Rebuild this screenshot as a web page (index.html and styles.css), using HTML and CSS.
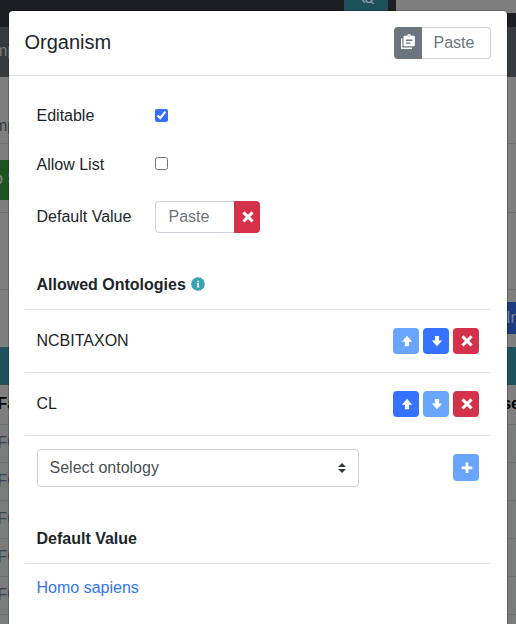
FILE: index.html
```html
<!DOCTYPE html>
<html lang="en">
<head>
<meta charset="utf-8">
<title>Organism</title>
<link rel="stylesheet" href="styles.css">
</head>
<body>
<svg class="defs" width="0" height="0" aria-hidden="true">
  <symbol id="up" viewBox="0 0 26 26"><path d="M14 7.8 19.2 13.8H16.1V18.2H11.9V13.8H8.8Z" fill="#fff"/></symbol>
  <symbol id="down" viewBox="0 0 26 26"><path d="M14 18.3 19.2 12.5H16.1V7.9H11.9V12.5H8.8Z" fill="#fff"/></symbol>
  <symbol id="cross" viewBox="0 0 26 26"><path d="M10.5 9.4 17.5 16.4M17.5 9.4 10.5 16.4" stroke="#fff" stroke-width="3" stroke-linecap="square" fill="none"/></symbol>
  <symbol id="plus" viewBox="0 0 26 26"><path d="M14 7.5V18.1M8.7 12.8H19.3" stroke="#fff" stroke-width="2.7" fill="none"/></symbol>
</svg>
<div class="page">
  <div class="topbar">
    <div class="search"><svg width="44" height="13" viewBox="0 0 44 13"><path d="M18.5 0 21 2.5"/><circle cx="25" cy="-.5" r="3"/><path d="M27 1.5 29.5 4"/></svg></div>
    <div class="searchbox"></div>
  </div>
  <div class="subbar"><span class="clip">mp</span></div>
  <div class="crumb"><span class="clip">mp</span></div>
  <div class="toolbar"><span class="green">o S</span></div>
  <div class="blank"></div>
  <div class="actions"><span class="blue">In</span></div>
  <div class="teal"></div>
  <div class="thead"><span>Fa</span><span>se</span></div>
  <div class="trow">FC</div>
  <div class="trow">FC</div>
  <div class="trow">FC</div>
  <div class="trow">FC</div>
  <div class="trow">FC</div>
  <div class="trow"></div>
</div>
<div class="modal">
  <header class="head">
    <h1>Organism</h1>
    <div class="group">
      <span class="clipicon"><svg width="28" height="32" viewBox="0 0 28 32"><path d="M7.7 11.5V21.3H18" fill="none" stroke="#fff" stroke-width="1.4"/><path fill="#fff" fill-rule="evenodd" d="M10.3 8.8H13.3A1.8 1.8 0 0 1 16.9 8.8H19.5Q20.9 8.8 20.9 10.2V18Q20.9 19.3 19.5 19.3H10.8Q9.5 19.3 9.5 18V10.2Q9.5 8.8 10.8 8.8ZM14.5 8.8H15.7V9.4H14.5ZM12 12.6V13.9H18.4V12.6ZM12 15.4V16.7H16.4V15.4Z"/></svg></span>
      <input class="paste headpaste" type="text" placeholder="Paste">
    </div>
  </header>
  <main class="body">
    <div class="field"><span class="label">Editable</span><input type="checkbox" class="check" checked></div>
    <div class="field list"><span class="label">Allow List</span><input type="checkbox" class="check"></div>
    <div class="field default"><span class="label">Default Value</span><div class="group"><input class="paste valuepaste" type="text" placeholder="Paste"><button class="btn red joined"><svg><use href="#cross"/></svg></button></div></div>

    <h2 class="allowed">Allowed Ontologies <svg class="info" width="14" height="14" viewBox="0 0 14 14"><circle cx="7" cy="7" r="6.8" fill="#3aa2b7"/><path d="M6.3 3.7H7.8V5.2H6.3ZM5.9 6H7.9V9.4H8.5V10.5H5.7V9.4H6.3V7.1H5.9Z" fill="#fff"/></svg></h2>
    <div class="ontology"><span>NCBITAXON</span><div class="buttons"><button class="btn light"><svg><use href="#up"/></svg></button><button class="btn primary"><svg><use href="#down"/></svg></button><button class="btn red"><svg><use href="#cross"/></svg></button></div></div>
    <div class="ontology"><span>CL</span><div class="buttons"><button class="btn primary"><svg><use href="#up"/></svg></button><button class="btn light"><svg><use href="#down"/></svg></button><button class="btn red"><svg><use href="#cross"/></svg></button></div></div>
    <div class="ontology add"><div class="select"><span>Select ontology</span><svg width="8" height="10" viewBox="0 0 8 10"><path d="M4 0 8 4H0ZM4 10 0 6H8Z" fill="#343a40"/></svg></div><button class="btn light"><svg><use href="#plus"/></svg></button></div>

    <h2>Default Value</h2>
    <div class="ontology value"><a>Homo sapiens</a></div>
  </main>
</div>
</body>
</html>
```
FILE: styles.css
```css
* { box-sizing: border-box; }
html, body { height: 100%; overflow: hidden; }
body { margin: 0; font: 16px/24px "Liberation Sans", Arial, sans-serif; color: #212529; background: #fff; }
.defs { position: absolute; }
h1, h2 { margin: 0; }

/* Dimmed page behind the dialog */
.page { height: 624px; overflow: hidden; background: #7f7f7f; white-space: nowrap; }
.topbar { height: 27px; background: #1c1e21; display: flex; align-items: flex-start; padding-left: 344px; gap: 8px; }
.search { width: 44px; height: 13px; background: #1d515c; }
.search svg { display: block; fill: none; stroke: #8b9799; stroke-width: 1.6; }
.searchbox { flex: 1; height: 13px; background: #7f7f7f; }
.subbar { height: 50px; background: #373b3f; padding-top: 12px; color: #7b7d7f; }
.clip { margin-left: -6px; }
.crumb { height: 67px; padding-top: 37px; color: #36383b; border-bottom: 1px solid #6f7071; }
.toolbar { height: 69px; padding-top: 16px; border-bottom: 1px solid #6f7071; }
.green { display: block; width: 40px; height: 40px; padding-top: 7px; text-indent: -6px; background: #1b5522; color: #858b85; overflow: hidden; }
.blank { height: 77px; border-bottom: 1px solid #6f7071; }
.actions { height: 57px; padding-top: 12px; display: flex; justify-content: flex-end; }
.blue { width: 10px; height: 32px; padding-top: 4px; background: #1c3b82; color: #828792; overflow: hidden; }
.teal { height: 38px; background: #1d515c; }
.thead { height: 40px; padding-top: 7px; border-bottom: 1px solid #6c6e6f; font-weight: bold; color: #000; display: flex; justify-content: space-between; margin: 0 -4px 0 -2.5px; }
.trow { height: 38px; padding-top: 6px; color: #34435e; background: #797c7b; border-bottom: 1px solid #6c6e6f; text-indent: -2.5px; }

/* Dialog */
.modal { position: absolute; left: 8px; top: 10px; width: 500px; height: 640px; background: #fff; background-clip: padding-box; border: 1px solid rgba(0, 0, 0, .2); border-radius: 5px; }
.head { height: 65px; padding: 0 16px 0 15.5px; display: flex; align-items: center; justify-content: space-between; border-bottom: 1px solid #dee2e6; }
h1 { font-size: 20px; font-weight: 400; line-height: 30px; padding-bottom: 2px; }
.group { display: flex; height: 32px; }
.clipicon { width: 28px; background: #6c757d; border-radius: 4px 0 0 4px; }
.clipicon svg { display: block; }
.paste { height: 32px; border: 1px solid #ced4da; padding: 0 12px 1px; font: inherit; background: #fff; outline: 0; border-radius: 0; }
.paste::placeholder { color: #6c757d; opacity: 1; }
.headpaste { width: 69px; padding-left: 11.5px; border-left: 0; border-radius: 0 4px 4px 0; }
.valuepaste { width: 79px; padding-left: 12.5px; border-right: 0; border-radius: 4px 0 0 4px; }
.body { padding: 16px; }
.field { display: flex; align-items: center; height: 48px; padding-left: 11.5px; }
.list { height: 49px; }
.default { height: 56px; margin-bottom: 16px; }
.label { width: 118.5px; }
.check { width: 13px; height: 13px; margin: 0 0 2px; accent-color: #366fff; }
h2 { font-size: 16px; line-height: 24px; padding: 12px 12px 12px 11.5px; height: 48px; }
.info { vertical-align: -1px; margin-left: 1px; }
.ontology { height: 63px; display: flex; align-items: center; justify-content: space-between; padding: 0 12px 0 11.5px; border-top: 1px solid #dee2e6; }
.buttons { display: flex; gap: 4px; }
.btn { width: 26px; height: 26px; padding: 0; border: 0; border-radius: 4px; }
.btn svg { display: block; width: 26px; height: 26px; }
.primary { background: #3572ff; }
.light { background: #69a4ff; }
.red { background: #d3324a; }
.joined { height: 32px; border-radius: 0 4px 4px 0; }
.joined svg { margin-top: -1px; }
.add { height: 64px; margin-bottom: 16px; padding-left: 12px; }
.select { width: 322px; height: 38px; border: 1px solid #ced4da; border-radius: 4px; display: flex; align-items: center; justify-content: space-between; padding: 0 12px 0 11.5px; color: #495057; }
.add .btn { height: 27px; }
.value { height: 48px; color: #2f75f5; }
```
